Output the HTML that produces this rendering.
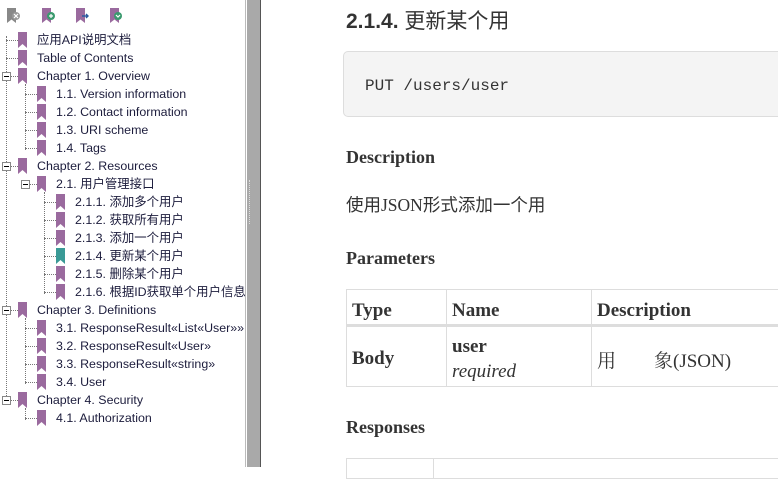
<!DOCTYPE html>
<html><head><meta charset="utf-8"><style>
*{margin:0;padding:0;box-sizing:border-box}
body{width:778px;height:467px;overflow:hidden;background:#fff;position:relative;font-family:"Liberation Sans","Noto Sans CJK SC",sans-serif}
#left{position:absolute;left:0;top:0;width:246px;height:467px;background:#fff;border-right:1px solid #bbb}
#split{position:absolute;left:247px;top:0;width:14px;height:467px;background:#a9a9a9;border-right:1px solid #555}
.grip{position:absolute;left:249px;top:180px;width:3px;height:44px;border-left:1px dotted #ddd}
.r{position:absolute;height:18px;font-size:12.4px;line-height:18px;color:#1c1c3c;white-space:nowrap}
.bm{position:absolute;width:9px;height:16px;background:#9a6a9e;clip-path:polygon(0 0,100% 0,100% 100%,50% 75%,0 100%)}
.bm.sel{background:#3a9a96}
.vl{position:absolute;border-left:1px dotted #777;width:0}
.hl{position:absolute;border-top:1px dotted #777;height:0}
.box{position:absolute;width:9px;height:9px;border:1px solid #888;background:#fff}
.box:after{content:"";position:absolute;left:1px;top:3px;width:5px;height:1px;background:#000}
#main{position:absolute;left:262px;top:0;right:0;height:467px;font-family:"Liberation Serif","Noto Serif CJK SC",serif;color:#333}
h1{position:absolute;left:84px;top:5px;font-family:"Liberation Sans","Noto Sans CJK SC",sans-serif;font-size:21px;font-weight:bold;color:#333;white-space:nowrap}
h1 span{font-weight:normal}
.code{position:absolute;left:81px;top:51px;width:500px;height:66px;background:#f4f4f4;border:1px solid #ddd;border-radius:5px;font-family:"Liberation Mono",monospace;font-size:16px;line-height:68px;padding-left:21px;color:#333}
h3{position:absolute;left:84px;font-size:18px;font-weight:bold;color:#333}
p{position:absolute;left:84px;top:192px;font-size:17.5px;font-family:"Liberation Serif","Noto Sans CJK SC",serif}
table{position:absolute;left:84px;border-collapse:collapse;font-size:19px}
td,th{border:1px solid #ddd;text-align:left;padding:0 5px}
th{border-bottom:3px solid #ddd;font-weight:bold;vertical-align:bottom;padding-bottom:2px}
td{vertical-align:middle;padding-top:5px}
</style></head><body>
<div id="left">
<svg style="position:absolute;left:4px;top:8px" width="120" height="18">
<path d="M3 0h9v15l-4.5-3.5L3 15z" fill="#888"/><circle cx="12" cy="8" r="4" fill="#999"/><path d="M10 6l4 4M14 6l-4 4" stroke="#fff" stroke-width="1.2"/>
<path d="M38 0h9v15l-4.5-3.5L38 15z" fill="#9a6a9e"/><circle cx="47" cy="8" r="4" fill="#3a9a6e"/><path d="M45 8h4M47 6v4" stroke="#fff" stroke-width="1.2"/>
<path d="M72 0h9v15l-4.5-3.5L72 15z" fill="#9a6a9e"/><path d="M78 8h6M82 6l2 2-2 2" stroke="#2a5aa0" stroke-width="1.4" fill="none"/>
<path d="M106 0h9v15l-4.5-3.5L106 15z" fill="#9a6a9e"/><circle cx="114" cy="8" r="4" fill="#3a9a6e"/><path d="M112 7l2 2 2-2" stroke="#fff" stroke-width="1.2" fill="none"/>
</svg>
<div class="vl" style="left:6px;top:36px;height:364px"></div>
<div class="vl" style="left:25px;top:84px;height:66px"></div>
<div class="vl" style="left:44px;top:192px;height:102px"></div>
<div class="vl" style="left:25px;top:318px;height:66px"></div>
<div class="vl" style="left:25px;top:408px;height:12px"></div>
<div id="tree"></div>
</div>
<div id="split"></div><div class="grip"></div>
<div id="main">
<h1>2.1.4. <span>更新某个用</span></h1>
<div class="code">PUT /users/user</div>
<h3 style="top:147px">Description</h3>
<p>使用JSON形式添加一个用</p>
<h3 style="top:248px">Parameters</h3>
<table style="top:289px;width:460px">
<tr style="height:36px"><th style="width:100px">Type</th><th style="width:145px">Name</th><th>Description</th></tr>
<tr style="height:61px"><td><b>Body</b></td><td style="line-height:25px"><b>user</b><br><i>required</i></td><td>用&nbsp;&nbsp;&nbsp;&nbsp;&nbsp;&nbsp;&nbsp;&nbsp;象(JSON)</td></tr>
</table>
<h3 style="top:417px">Responses</h3>
<table style="top:458px;width:460px"><tr style="height:20px"><td style="width:87px"></td><td></td></tr></table>
</div>
<script>
var rows=[[0,"应用API说明文档"],[0,"Table of Contents"],[0,"Chapter 1. Overview",1],[1,"1.1. Version information"],[1,"1.2. Contact information"],[1,"1.3. URI scheme"],[1,"1.4. Tags"],[0,"Chapter 2. Resources",1],[1,"2.1. 用户管理接口",1],[2,"2.1.1. 添加多个用户"],[2,"2.1.2. 获取所有用户"],[2,"2.1.3. 添加一个用户"],[2,"2.1.4. 更新某个用户",0,1],[2,"2.1.5. 删除某个用户"],[2,"2.1.6. 根据ID获取单个用户信息"],[0,"Chapter 3. Definitions",1],[1,"3.1. ResponseResult«List«User»»"],[1,"3.2. ResponseResult«User»"],[1,"3.3. ResponseResult«string»"],[1,"3.4. User"],[0,"Chapter 4. Security",1],[1,"4.1. Authorization"]];
var h="";rows.forEach(function(r,i){var t=31+18*i,ix=18+19*r[0],lx=6+19*r[0];
h+='<div class="hl" style="left:'+lx+'px;top:'+(t+9)+'px;width:'+(ix-lx)+'px"></div>';
if(r[2])h+='<div class="box" style="left:'+(lx-4)+'px;top:'+(t+5)+'px"></div>';
h+='<div class="bm'+(r[3]?' sel':'')+'" style="left:'+ix+'px;top:'+(t+1)+'px"></div>';
h+='<div class="r" style="left:'+(ix+19)+'px;top:'+t+'px">'+r[1]+'</div>';});
document.getElementById("tree").innerHTML=h;
</script>
</body></html>
